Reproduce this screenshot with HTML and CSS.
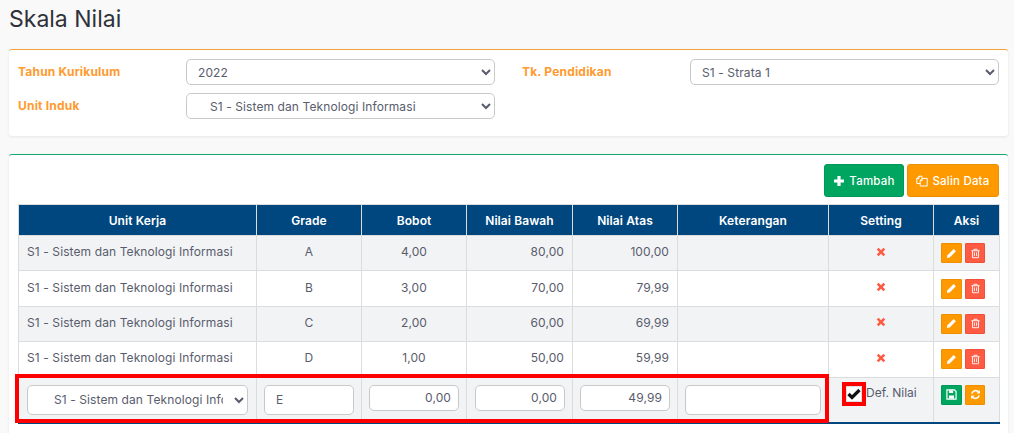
FILE: index.html
```html
<!DOCTYPE html>
<html>
<head>
  <meta charset="utf-8">
  <title>Skala Nilai</title>
  <link rel="stylesheet" href="styles.css">
</head>
<body>
<h1 class="page-title">Skala Nilai</h1>

<div class="panel panel-filter">
  <div class="filter-grid">
    <label class="filter-label">Tahun Kurikulum</label>
    <select class="field"><option>2022</option></select>
    <label class="filter-label filter-label-right">Tk. Pendidikan</label>
    <select class="field"><option>S1 - Strata 1</option></select>
    <label class="filter-label">Unit Induk</label>
    <select class="field field-indent"><option>&nbsp;&nbsp;&nbsp;&nbsp;S1 - Sistem dan Teknologi Informasi</option></select>
  </div>
</div>

<div class="panel panel-table">
  <div class="toolbar">
    <button class="btn btn-green">
      <svg class="btn-icon" viewBox="0 0 12 12"><path d="M4.4 1h3.2v3.4H11v3.2H7.6V11H4.4V7.6H1V4.4h3.4z" fill="#fff"/></svg>
      Tambah
    </button>
    <button class="btn btn-orange">
      <svg class="btn-icon" viewBox="0 0 12 12" fill="none" stroke="#fff" stroke-width="1"><path d="M4 8.5H.8V3.6L3 1.2h3v2.2"/><path d="M3 1.2v2.4H.8"/><path d="M4.2 11V5.6l2-2.2h5V11z"/><path d="M6.2 3.4v2.2H4.2"/></svg>
      Salin Data
    </button>
  </div>

  <div class="table-wrap">
    <table class="grade-table">
      <colgroup>
        <col class="col-unit"><col class="col-grade"><col class="col-num"><col class="col-num2">
        <col class="col-num"><col class="col-note"><col class="col-num"><col class="col-aksi">
      </colgroup>
      <thead>
        <tr>
          <th>Unit Kerja</th><th>Grade</th><th>Bobot</th><th>Nilai Bawah</th>
          <th>Nilai Atas</th><th>Keterangan</th><th>Setting</th><th>Aksi</th>
        </tr>
      </thead>
      <tbody>
        <tr class="row-1">
          <td>S1 - Sistem dan Teknologi Informasi</td><td class="center">A</td><td class="center">4,00</td>
          <td class="right">80,00</td><td class="right">100,00</td><td></td>
          <td class="center"><svg class="icon-x" viewBox="0 0 10 10"><path d="M2.6.8 5 3.2 7.4.8l1.8 1.8L6.8 5l2.4 2.4-1.8 1.8L5 6.8 2.6 9.2.8 7.4 3.2 5 .8 2.6z" fill="#ff5a42"/></svg></td>
          <td class="aksi"><div class="aksi-btns">
            <button class="mini mini-orange"><svg viewBox="0 0 12 12"><path d="M8.4 1.2 10.8 3.6 4 10.4 1 11l.6-3z" fill="#fff"/></svg></button>
            <button class="mini mini-red"><svg viewBox="0 0 12 12" fill="none" stroke="#fff"><path d="M1.5 3h9M4.3 3V1.4h3.4V3M2.7 3v7.6h6.6V3M4.8 4.8v4M7.2 4.8v4"/></svg></button>
          </div></td>
        </tr>
        <tr class="row-2">
          <td>S1 - Sistem dan Teknologi Informasi</td><td class="center">B</td><td class="center">3,00</td>
          <td class="right">70,00</td><td class="right">79,99</td><td></td>
          <td class="center"><svg class="icon-x" viewBox="0 0 10 10"><path d="M2.6.8 5 3.2 7.4.8l1.8 1.8L6.8 5l2.4 2.4-1.8 1.8L5 6.8 2.6 9.2.8 7.4 3.2 5 .8 2.6z" fill="#ff5a42"/></svg></td>
          <td class="aksi"><div class="aksi-btns">
            <button class="mini mini-orange"><svg viewBox="0 0 12 12"><path d="M8.4 1.2 10.8 3.6 4 10.4 1 11l.6-3z" fill="#fff"/></svg></button>
            <button class="mini mini-red"><svg viewBox="0 0 12 12" fill="none" stroke="#fff"><path d="M1.5 3h9M4.3 3V1.4h3.4V3M2.7 3v7.6h6.6V3M4.8 4.8v4M7.2 4.8v4"/></svg></button>
          </div></td>
        </tr>
        <tr class="row-3">
          <td>S1 - Sistem dan Teknologi Informasi</td><td class="center">C</td><td class="center">2,00</td>
          <td class="right">60,00</td><td class="right">69,99</td><td></td>
          <td class="center"><svg class="icon-x" viewBox="0 0 10 10"><path d="M2.6.8 5 3.2 7.4.8l1.8 1.8L6.8 5l2.4 2.4-1.8 1.8L5 6.8 2.6 9.2.8 7.4 3.2 5 .8 2.6z" fill="#ff5a42"/></svg></td>
          <td class="aksi"><div class="aksi-btns">
            <button class="mini mini-orange"><svg viewBox="0 0 12 12"><path d="M8.4 1.2 10.8 3.6 4 10.4 1 11l.6-3z" fill="#fff"/></svg></button>
            <button class="mini mini-red"><svg viewBox="0 0 12 12" fill="none" stroke="#fff"><path d="M1.5 3h9M4.3 3V1.4h3.4V3M2.7 3v7.6h6.6V3M4.8 4.8v4M7.2 4.8v4"/></svg></button>
          </div></td>
        </tr>
        <tr class="row-4">
          <td>S1 - Sistem dan Teknologi Informasi</td><td class="center">D</td><td class="center">1,00</td>
          <td class="right">50,00</td><td class="right">59,99</td><td></td>
          <td class="center"><svg class="icon-x" viewBox="0 0 10 10"><path d="M2.6.8 5 3.2 7.4.8l1.8 1.8L6.8 5l2.4 2.4-1.8 1.8L5 6.8 2.6 9.2.8 7.4 3.2 5 .8 2.6z" fill="#ff5a42"/></svg></td>
          <td class="aksi"><div class="aksi-btns">
            <button class="mini mini-orange"><svg viewBox="0 0 12 12"><path d="M8.4 1.2 10.8 3.6 4 10.4 1 11l.6-3z" fill="#fff"/></svg></button>
            <button class="mini mini-red"><svg viewBox="0 0 12 12" fill="none" stroke="#fff"><path d="M1.5 3h9M4.3 3V1.4h3.4V3M2.7 3v7.6h6.6V3M4.8 4.8v4M7.2 4.8v4"/></svg></button>
          </div></td>
        </tr>
        <tr class="row-edit">
          <td class="cell-unit"><select class="field field-tall field-unit"><option>&nbsp;&nbsp;&nbsp;&nbsp;S1 - Sistem dan Teknologi Informasi</option></select></td>
          <td><input class="field field-tall" value="E"></td>
          <td><input class="field num" value="0,00"></td>
          <td class="cell-bawah"><input class="field num" value="0,00"></td>
          <td><input class="field num" value="49,99"></td>
          <td><input class="field field-tall"></td>
          <td class="setting-cell">
            <div class="setting-inner">
              <span class="check-mark"><svg viewBox="0 0 14 12"><path d="M1.5 6 5 9.5 12.5 2" fill="none" stroke="#111" stroke-width="3.2"/></svg></span>
              <span class="setting-text">Def. Nilai</span>
            </div>
          </td>
          <td class="aksi"><div class="aksi-btns">
            <button class="mini mini-green"><svg viewBox="0 0 12 12"><path d="M1 1h8.2L11 2.8V11H1z" fill="none" stroke="#fff" stroke-width="1.3"/><path d="M3.4 1.4h4.4v3H3.4zM3.2 7h5.6v3.6H3.2z" fill="#fff"/></svg></button>
            <button class="mini mini-orange"><svg viewBox="0 0 12 12" fill="none" stroke="#fff" stroke-width="1.8"><path d="M2 5a4.2 4.2 0 0 1 7.4-1.6"/><path d="M10 7a4.2 4.2 0 0 1-7.4 1.6"/><path d="M10.8 1v3.8H7z" fill="#fff" stroke="none"/><path d="M1.2 11V7.2H5z" fill="#fff" stroke="none"/></svg></button>
          </div></td>
        </tr>
      </tbody>
    </table>
    <div class="edit-highlight"></div>
  </div>
</div>
</body>
</html>
```

FILE: styles.css
```css
html, body {
  height: 100%;
}

body {
  margin: 0;
  padding: 0 6px 0 9px;
  background: #f9f9f9;
  font-family: 'Inter', 'Liberation Sans', sans-serif;
  font-size: 12px;
  letter-spacing: 0.1px;
  color: #595c6c;
  overflow: hidden;
}

.page-title {
  margin: 0;
  padding-top: 5px;
  height: 49px;
  box-sizing: border-box;
  font-size: 23px;
  font-weight: 400;
  line-height: 28px;
  letter-spacing: 0;
  color: #2f3238;
}

.panel {
  background: #fff;
  border-radius: 3px;
  box-shadow: 0 1px 3px rgba(0, 0, 0, 0.08);
}

.panel-filter {
  box-sizing: border-box;
  height: 87px;
  padding: 9px 9px 0;
  border-top: 1px solid #f5a23a;
}

.filter-grid {
  display: grid;
  grid-template-columns: 159px 309px 177px 309px;
  column-gap: 9px;
  row-gap: 8px;
  grid-auto-rows: 26px;
  align-items: center;
}

.filter-grid .field {
  width: 100%;
}

.filter-label {
  font-weight: 700;
  font-size: 12px;
  letter-spacing: 0.2px;
  color: #ff9a2e;
  padding-bottom: 2px;
}

.filter-label-right {
  padding-left: 18px;
}

.field {
  box-sizing: border-box;
  height: 26px;
  padding: 0 7px;
  border: 1px solid #c9c9c9;
  border-radius: 5px;
  background: #fff;
  font-family: inherit;
  font-size: 12px;
  letter-spacing: 0.1px;
  color: #595c6c;
}

.filter-grid .field-indent {
  padding-left: 5px;
}

.panel-table {
  box-sizing: border-box;
  margin-top: 18px;
  height: 300px;
  padding: 9px 9px 0;
  border-top: 1px solid #14ab6f;
}

.toolbar {
  display: flex;
  justify-content: flex-end;
  gap: 3px;
  height: 40px;
}

.btn {
  display: flex;
  align-items: center;
  justify-content: center;
  gap: 4px;
  height: 33px;
  padding: 0;
  border-radius: 3px;
  color: #fff;
  font-family: inherit;
  font-size: 11.5px;
  font-weight: 500;
  letter-spacing: 0.2px;
}

.btn-icon {
  width: 12px;
  height: 12px;
}

.btn-green {
  width: 80px;
  background: #00a65f;
  border: 1px solid #00965a;
}

.btn-orange {
  width: 92px;
  background: #ff9900;
  border: 1px solid #ee8f00;
}

.table-wrap {
  position: relative;
}

.grade-table {
  width: 981px;
  table-layout: fixed;
  border-collapse: collapse;
}

.col-unit { width: 238px; }
.col-grade { width: 105px; }
.col-num { width: 105px; }
.col-num2 { width: 106px; }
.col-note { width: 151px; }
.col-aksi { width: 66px; }

.grade-table th,
.grade-table td {
  border: 1px solid #dcdcdc;
  padding: 0 8px;
}

.grade-table td {
  padding-bottom: 3px;
}

.grade-table th {
  height: 31px;
  box-sizing: border-box;
  background: #00477f;
  color: #fff;
  font-size: 12px;
  font-weight: 600;
  text-align: center;
}

.grade-table tbody tr {
  height: 35.4px;
}

.grade-table tbody td {
  white-space: nowrap;
}

.row-1, .row-3, .row-edit {
  background: #f2f3f5;
}

.center { text-align: center; }
.right { text-align: right; }

.icon-x {
  display: block;
  width: 10px;
  height: 10px;
  margin: 0 auto;
}

.grade-table td.aksi {
  padding: 0 0 0 7px;
  vertical-align: middle;
}

.aksi-btns {
  display: flex;
  gap: 3px;
}

.mini {
  display: flex;
  align-items: center;
  justify-content: center;
  width: 20px;
  height: 20px;
  padding: 0;
  border-radius: 1px;
}

.mini:first-child {
  width: 21px;
}

.mini svg {
  width: 11px;
  height: 11px;
}

.mini-orange {
  background: #ff9900;
  border: 1px solid #ee8f00;
}

.mini-red {
  background: #ff5a42;
  border: 1px solid #f0503a;
}

.mini-green {
  background: #00a65f;
  border: 1px solid #00965a;
}

.grade-table .row-edit {
  height: 46px;
}

.grade-table .row-edit td {
  vertical-align: top;
  padding: 7px;
  border-bottom: 2px solid #00477f;
}

.grade-table .row-edit td.cell-unit {
  padding: 7px 8px;
}

.grade-table .row-edit td.cell-bawah {
  padding-left: 8px;
}

.grade-table .row-edit td.setting-cell {
  padding: 7px 0 0 17px;
}

.grade-table .row-edit td.aksi {
  padding: 7px 0 0 7px;
}

.row-edit .field {
  width: 100%;
  padding: 0 7px;
}

.row-edit .field-tall {
  height: 30px;
  padding: 0 11px;
}

.row-edit .field-unit {
  padding: 0 8px;
}

.row-edit .num {
  text-align: right;
}

.setting-inner {
  display: flex;
  align-items: flex-start;
  gap: 4px;
}

.check-mark {
  display: flex;
  align-items: center;
  justify-content: center;
  box-sizing: border-box;
  width: 16px;
  height: 16px;
  margin-top: 1px;
  background: #fff;
  border: 1px solid #ddd;
  outline: 4px solid #f00;
}

.check-mark svg {
  width: 14px;
  height: 12px;
}

.setting-text {
  line-height: 16px;
  letter-spacing: 0;
}

.edit-highlight {
  position: absolute;
  left: -3px;
  top: 170px;
  width: 814px;
  height: 49px;
  box-sizing: border-box;
  border: 4px solid #f00;
  pointer-events: none;
}
```
